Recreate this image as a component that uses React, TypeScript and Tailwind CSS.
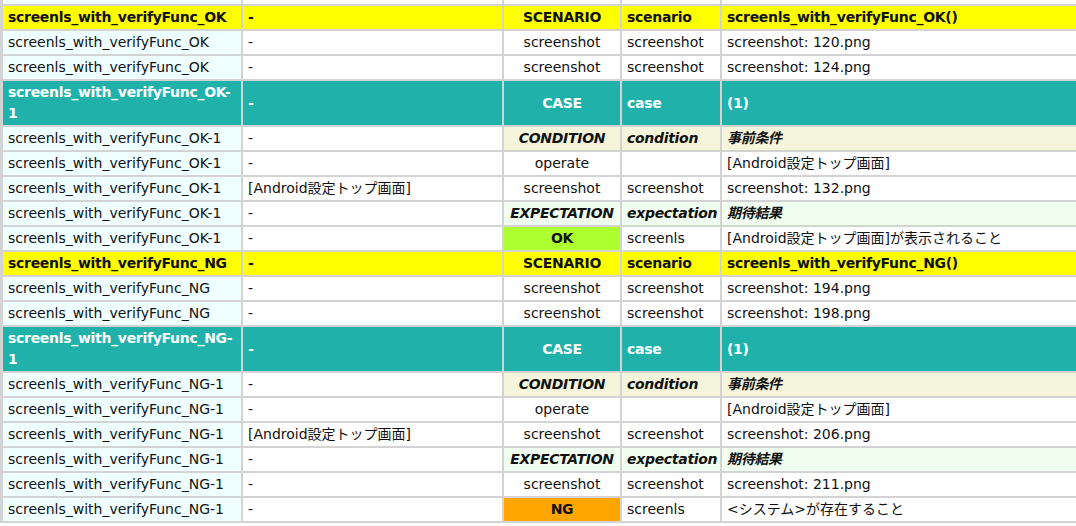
type Kind = "plain" | "scenario" | "case" | "condition" | "expectation" | "ok" | "ng";

type Row = { k: Kind; c: string[] };

const OK1 = "screenls_with_verifyFunc_OK-1";
const NG1 = "screenls_with_verifyFunc_NG-1";
const ANDROID = "[Android設定トップ画面]";

const rows: Row[] = [
  { k: "scenario", c: ["screenls_with_verifyFunc_OK", "-", "SCENARIO", "scenario", "screenls_with_verifyFunc_OK()"] },
  { k: "plain", c: ["screenls_with_verifyFunc_OK", "-", "screenshot", "screenshot", "screenshot: 120.png"] },
  { k: "plain", c: ["screenls_with_verifyFunc_OK", "-", "screenshot", "screenshot", "screenshot: 124.png"] },
  { k: "case", c: [OK1, "-", "CASE", "case", "(1)"] },
  { k: "condition", c: [OK1, "-", "CONDITION", "condition", "事前条件"] },
  { k: "plain", c: [OK1, "-", "operate", "", ANDROID] },
  { k: "plain", c: [OK1, ANDROID, "screenshot", "screenshot", "screenshot: 132.png"] },
  { k: "expectation", c: [OK1, "-", "EXPECTATION", "expectation", "期待結果"] },
  { k: "ok", c: [OK1, "-", "OK", "screenls", ANDROID + "が表示されること"] },
  { k: "scenario", c: ["screenls_with_verifyFunc_NG", "-", "SCENARIO", "scenario", "screenls_with_verifyFunc_NG()"] },
  { k: "plain", c: ["screenls_with_verifyFunc_NG", "-", "screenshot", "screenshot", "screenshot: 194.png"] },
  { k: "plain", c: ["screenls_with_verifyFunc_NG", "-", "screenshot", "screenshot", "screenshot: 198.png"] },
  { k: "case", c: [NG1, "-", "CASE", "case", "(1)"] },
  { k: "condition", c: [NG1, "-", "CONDITION", "condition", "事前条件"] },
  { k: "plain", c: [NG1, "-", "operate", "", ANDROID] },
  { k: "plain", c: [NG1, ANDROID, "screenshot", "screenshot", "screenshot: 206.png"] },
  { k: "expectation", c: [NG1, "-", "EXPECTATION", "expectation", "期待結果"] },
  { k: "plain", c: [NG1, "-", "screenshot", "screenshot", "screenshot: 211.png"] },
  { k: "ng", c: [NG1, "-", "NG", "screenls", "<システム>が存在すること"] },
];

function cellClass(k: Kind, col: number) {
  const base = "flex items-center px-[5px] py-px leading-[21px] whitespace-nowrap overflow-hidden";
  const align = col === 2 ? " justify-center" : "";
  const bold = " font-bold tracking-[-0.3px]";
  let look = "";
  if (k === "scenario") look = " bg-[#ffff00]" + bold;
  else if (k === "case") look = " bg-[#20b2aa] text-white" + bold;
  else if (col === 0) look = " bg-[#f0ffff]";
  else if (col === 1) look = " bg-white";
  else if (k === "condition") look = " bg-[#f5f5dc] italic" + bold;
  else if (k === "expectation") look = " bg-[#f0fff0] italic" + bold;
  else if (k === "ok" && col === 2) look = " bg-[#adff2f]" + bold;
  else if (k === "ng" && col === 2) look = " bg-[#ffa500]" + bold;
  else look = " bg-white";
  return base + align + look;
}

export default function App() {
  return (
    <div className="w-[1076px] h-[526px] overflow-hidden bg-white">
      <div className="grid grid-cols-[238px_259px_116px_98px_380px] gap-[2px] w-max bg-[#d3d3d3] pl-[3px] pb-[2px] text-[14px] text-[#111] font-['DejaVu_Sans','Noto_Sans_CJK_JP',sans-serif]">
        {/* tail of the row above, scrolled out of view */}
        <div className="h-[4px] bg-[#f0ffff]"></div>
        <div className="h-[4px] bg-white"></div>
        <div className="h-[4px] bg-white"></div>
        <div className="h-[4px] bg-white"></div>
        <div className="h-[4px] bg-white"></div>

        {rows.map((r, i) =>
          r.c.map((text, col) => (
            <div key={i + "-" + col} className={cellClass(r.k, col)}>
              {r.k === "case" && col === 0 ? (
                <span>
                  {text.slice(0, -1)}
                  <br />
                  {text.slice(-1)}
                </span>
              ) : (
                text
              )}
            </div>
          ))
        )}
      </div>
    </div>
  );
}
